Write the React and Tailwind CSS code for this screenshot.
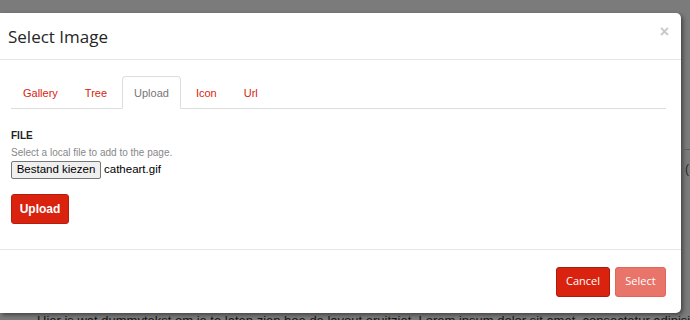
const tabs = ["Gallery", "Tree", "Upload", "Icon", "Url"];

const App = () => {
  return (
    <div className="w-[690px] h-[320px] overflow-hidden bg-[#7b7b7b] font-['Liberation_Sans',Arial,sans-serif]">
      <div className="flex pt-[13px]">
        {/* modal */}
        <div className="w-[681px] h-[300px] shrink-0 bg-white rounded-r-[5px] shadow-[2px_2px_4px_rgba(0,0,0,0.45)] flex flex-col">
          <div className="h-[47px] shrink-0 border-b border-[#e5e5e5] flex items-center justify-between pl-[8px] pr-[12px]">
            <h4 className="font-['Open_Sans',sans-serif] text-[17px] text-[#262626] mt-[1px]">Select Image</h4>
            <span className="text-[16px] font-bold text-[#c8c8c8] leading-none -mt-[8px]">×</span>
          </div>

          <div className="flex-1 pl-[11px] pr-[15px] pt-[16px]">
            <ul className="flex border-b border-[#dddddd]">
              {tabs.map((t) => (
                <li key={t} className="mr-[3px] -mb-px">
                  <a
                    className={`block px-[11px] h-[33px] leading-[32px] text-[11px] rounded-t-[4px] border ${
                      t === "Upload"
                        ? "text-[#777] bg-white border-[#dddddd] border-b-white"
                        : "text-[#d9230f] border-transparent"
                    }`}
                  >
                    {t}
                  </a>
                </li>
              ))}
            </ul>

            <div className="pt-[20px]">
              <div className="text-[10px] font-bold text-[#222] leading-[14px]">FILE</div>
              <div className="text-[10px] text-[#888] leading-[14px] mt-[3px]">Select a local file to add to the page.</div>
              <div className="flex items-center mt-[1px]">
                <span className="h-[18px] w-[90px] flex items-center justify-center border border-[#767676] bg-[#efefef] rounded-[2px] text-[11.5px] text-black">
                  Bestand kiezen
                </span>
                <span className="ml-[3px] text-[11.5px] text-black">catheart.gif</span>
              </div>
              <button className="mt-[15px] h-[30px] w-[58px] rounded-[3px] bg-[#d9230f] border border-[#b81d0c] text-white font-bold text-[12px]">
                Upload
              </button>
            </div>
          </div>

          <div className="h-[64px] shrink-0 border-t border-[#e5e5e5] flex items-center justify-end gap-[5px] pr-[15px]">
            <button className="h-[30px] w-[54px] rounded-[3px] bg-[#d9230f] border border-[#a91b0c] text-white text-[11px] font-['Open_Sans',sans-serif]">
              Cancel
            </button>
            <button className="h-[30px] w-[51px] rounded-[3px] bg-[#e8746a] border border-[#e0655a] text-white text-[11px] font-['Open_Sans',sans-serif]">
              Select
            </button>
          </div>
        </div>

        {/* page peeking out on the right */}
        <div className="flex-1 h-[300px] flex flex-col">
          <div className="h-[137px] border-b border-[#5e5e5e]"></div>
          <div className="pl-[4px] pt-[13px] text-[12px] text-[#222] leading-none">(</div>
        </div>
      </div>

      <p className="pl-[37px] text-[13px] leading-[16px] text-[#141414] whitespace-nowrap">
        Hier is wat dummytekst om je te laten zien hoe de layout eruitziet. Lorem ipsum dolor sit amet, consectetur adipisicing elit, sed do
      </p>
    </div>
  );
};

export default App;
